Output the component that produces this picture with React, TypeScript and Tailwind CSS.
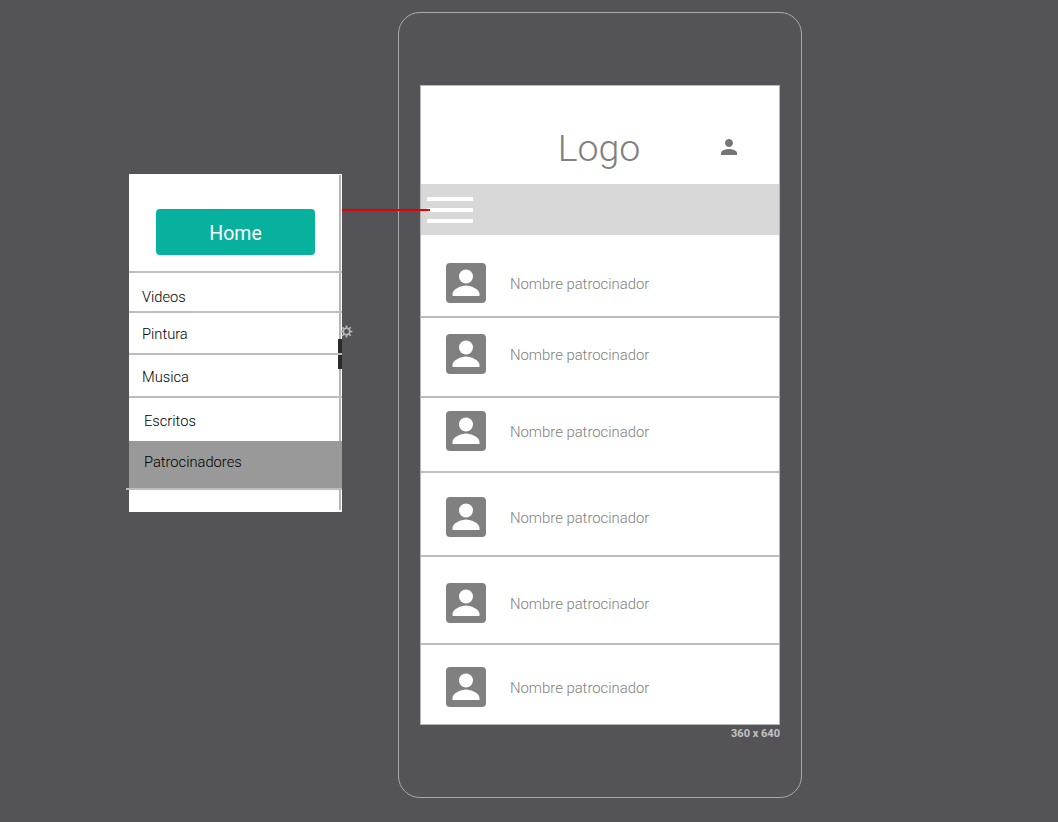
const rows = [
  { h: "h-[83px]", pt: "pt-[28px]" },
  { h: "h-[80px]", pt: "pt-[16px]" },
  { h: "h-[75px]", pt: "pt-[13px]" },
  { h: "h-[84px]", pt: "pt-[24px]" },
  { h: "h-[88px]", pt: "pt-[26px]" },
  { h: "h-[80px]", pt: "pt-[22px]" },
];

const Avatar = () => (
  <svg width="40" height="40" viewBox="0 0 40 40" className="shrink-0">
    <rect width="40" height="40" rx="4" fill="#808080" />
    <circle cx="20" cy="13.5" r="7" fill="#fff" />
    <path d="M6.5 33v-2c0-5 9-8.5 13.5-8.5s13.5 3.5 13.5 8.5v2z" fill="#fff" />
  </svg>
);

const Gear = () => (
  <svg width="13" height="13" viewBox="0 0 24 24" fill="none" stroke="#b4b9b9" strokeWidth="3">
    <circle cx="12" cy="12" r="6" />
    <path d="M12 1v5M12 18v5M1 12h5M18 12h5M4.2 4.2l3.6 3.6M16.2 16.2l3.6 3.6M4.2 19.8l3.6-3.6M16.2 7.8l3.6-3.6" />
  </svg>
);

const menuRow = "relative flex items-center text-[14.7px] font-light text-black border-b-2 border-[#bdbdbd]";

const SideMenu = () => (
  <div className="relative w-[213px] h-[338px] bg-white shrink-0 font-['Roboto',sans-serif]">
    <div className="absolute top-[1px] bottom-[2px] right-[1px] w-[2px] bg-[#b5b5b5]" />
    <div className="relative h-[99px] border-b-2 border-[#bdbdbd] pt-[35px] pl-[27px]">
      <div className="w-[159px] h-[46px] rounded-[4px] bg-[#08b09e] flex items-center justify-center pt-[4px] text-white text-[19.5px]">
        Home
      </div>
    </div>
    <div className={`${menuRow} h-[40px] pl-[13px] pt-[10px]`}>Videos</div>
    <div className={`${menuRow} h-[42px] pl-[13px] pt-[2px]`}>Pintura</div>
    <div className={`${menuRow} h-[43px] pl-[13px] pt-[4px]`}>Musica</div>
    <div className="h-[43px] flex items-center pl-[15px] pt-[3px] text-[14.7px] font-light text-black">Escritos</div>
    <div className="relative h-[49px] bg-[#999999] border-b-2 border-[#bdbdbd] flex items-start pl-[15px] pt-[10px] text-[14.7px] font-light text-black">
      Patrocinadores
      <div className="absolute left-[-3px] bottom-[-2px] w-[3px] h-[2px] bg-[#bdbdbd]" />
    </div>
    <div className="absolute top-[165px] left-[209px] w-[4px] h-[30px] bg-[#2b2b2b]" />
    <div className="absolute top-[179px] left-[209px] w-[4px] h-[2px] bg-[#bdbdbd]" />
    <div className="absolute top-[151px] left-[211px]">
      <Gear />
    </div>
  </div>
);

const PhoneScreen = () => (
  <div className="relative w-[360px] h-[640px] bg-white border border-[#b5b5b5] font-['Roboto',sans-serif]">
    <div className="h-[98px] flex items-center justify-center relative">
      <span className="text-[37.5px] font-light text-[#808080] mt-[26px] mr-[2px]">Logo</span>
      <svg width="24" height="24" viewBox="0 0 24 24" fill="#757575" className="absolute left-[296px] top-[49px]">
        <path d="M12 12c2.21 0 4-1.79 4-4s-1.79-4-4-4-4 1.79-4 4 1.79 4 4 4zm0 2c-2.67 0-8 1.34-8 4v2h16v-2c0-2.66-5.33-4-8-4z" />
      </svg>
    </div>
    <div className="h-[51px] bg-[#d8d8d8] pl-[6px] pt-[13px] flex flex-col gap-[7px]">
      <div className="w-[46px] h-[4px] bg-white" />
      <div className="w-[46px] h-[4px] bg-white" />
      <div className="w-[46px] h-[4px] bg-white" />
    </div>
    {rows.map((row, i) => (
      <div
        key={i}
        className={`${row.h} ${row.pt} pl-[25px] flex items-start gap-[24px] ${i < rows.length - 1 ? "border-b-2 border-[#bdbdbd]" : ""}`}
      >
        <Avatar />
        <span className="text-[14.85px] font-light text-[#808080] leading-[42px]">Nombre patrocinador</span>
      </div>
    ))}
    <span className="absolute right-[-1px] top-[640px] text-[11px] font-bold text-[#c4c4c4]">360 x 640</span>
  </div>
);

export default function App() {
  return (
    <div className="relative w-[1058px] h-[822px] bg-[#545358] overflow-hidden flex items-start">
      <div className="ml-[129px] mt-[174px]">
        <SideMenu />
      </div>
      <div className="ml-[56px] mt-[12px] w-[404px] h-[786px] rounded-[22px] border border-[#a9a9ab] pl-[21px] pt-[72px] shrink-0">
        <PhoneScreen />
      </div>
      <div className="absolute left-[342px] top-[209px] w-[88px] h-[2px] bg-[#e60000]" />
    </div>
  );
}
